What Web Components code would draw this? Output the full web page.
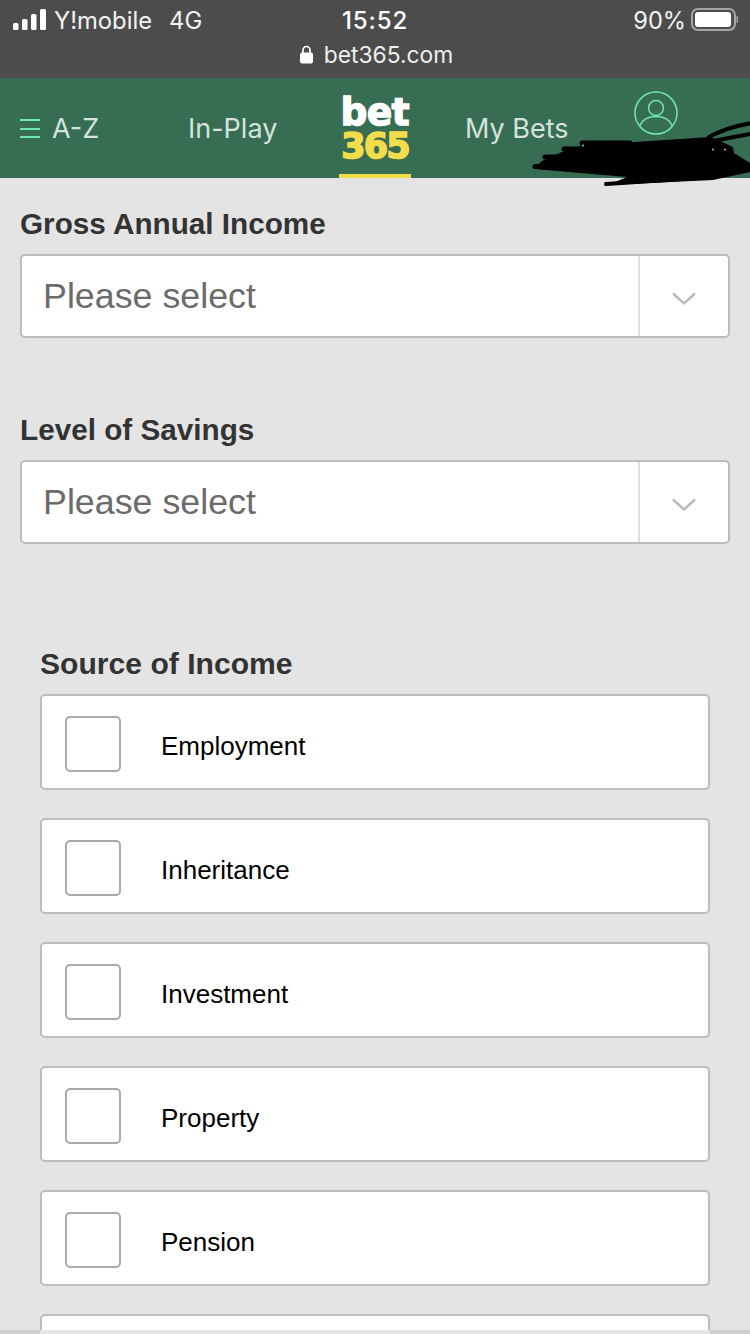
<!DOCTYPE html>
<html><head><meta charset="utf-8"><style>
html,body{margin:0;padding:0;height:1334px;overflow:hidden;background:#e4e4e4;font-family:"Liberation Sans",Arial,sans-serif}
</style></head><body>
<app-screen>
<status-bar></status-bar>
<site-header></site-header>
<main-form>
<select-field label="Gross Annual Income"></select-field>
<select-field label="Level of Savings" style="margin-top:75px"></select-field>
<check-group label="Source of Income">
<check-row>Employment</check-row>
<check-row>Inheritance</check-row>
<check-row>Investment</check-row>
<check-row>Property</check-row>
<check-row>Pension</check-row>
<check-row></check-row>
</check-group>
</main-form>
</app-screen>
<script>
function def(name,html){customElements.define(name,class extends HTMLElement{constructor(){super();this.attachShadow({mode:'open'}).innerHTML=html}connectedCallback(){const l=this.getAttribute('label');const t=this.shadowRoot.querySelector('.label');if(l&&t)t.textContent=l}})}
def('app-screen',`<style>:host{display:block;position:relative;width:750px;height:1334px;overflow:hidden}
.strip{position:absolute;left:0;right:0;bottom:0;height:4px;background:#e6e6e6}
.strip i{position:absolute;top:0;height:4px;background:#cfcfcf}</style>
<slot></slot><div class="strip"><i style="left:0;width:40px"></i><i style="right:0;width:40px"></i></div>`);
def('status-bar',`<style>:host{display:block;height:78px;box-sizing:border-box;background:#4d4c4c;color:#fff;font-family:Inter,"Liberation Sans",sans-serif}
.row{display:grid;grid-template-columns:1fr auto 1fr;align-items:center;height:40px}
.l{display:flex;align-items:center;padding-left:13px;font-size:23.800px;color:#f2f2f2}
.l svg{margin:-2px 7px 0 0}.l span+span{margin-left:17px}
.t{font-size:24px;font-weight:500;letter-spacing:.9px}
.r{display:flex;justify-content:flex-end;align-items:center;padding-right:11px;font-size:23.600px;color:#f2f2f2}
.r svg{margin-left:5px}
.url{display:flex;justify-content:center;align-items:center;height:24px;padding-left:3px;font-size:22.800px;color:#eee;margin-top:2px}
.url svg{margin-right:11px}</style>
<div class="row"><div class="l"><svg width="34" height="21" viewBox="0 0 34 21"><rect x="0" y="14" width="5.500" height="7" rx="1.500" fill="#fff"/><rect x="9" y="10" width="5.500" height="11" rx="1.500" fill="#fff"/><rect x="18" y="5" width="5.500" height="16" rx="1.500" fill="#fff"/><rect x="27" y="0" width="6" height="21" rx="1.500" fill="#fff"/></svg><span>Y!mobile</span><span>4G</span></div>
<div class="t">15:52</div>
<div class="r"><span>90%</span><svg width="48" height="24" viewBox="0 0 48 24"><rect x="1" y="1" width="43" height="21" rx="6" fill="none" stroke="#a5a5a5" stroke-width="2"/><rect x="4" y="4" width="36" height="15" rx="3" fill="#fff"/><rect x="45.500" y="8" width="1.500" height="7" rx=".7" fill="#a5a5a5"/></svg></div></div>
<div class="url"><svg width="13" height="19" viewBox="0 0 13 19"><path d="M3 8V5a3.500 3.500 0 0 1 7 0v3" fill="none" stroke="#fff" stroke-width="1.700"/><rect x="0" y="7.500" width="13" height="11" rx="2" fill="#fff"/></svg><span>bet365.com</span></div>`);
def('site-header',`<style>:host{display:block;height:100px;background:#366d53;position:relative;color:#d5e3dc;font-family:Inter,"Liberation Sans",sans-serif;font-size:27px}
.bar{display:grid;grid-template-columns:33px 136px 150px 127px 169px 1fr;height:100px;padding-left:19px;box-sizing:border-box;align-items:start}
.menu{margin:41px 0 0 1px;display:flex;flex-direction:column;gap:6.500px}
.menu i{display:block;width:20px;height:2px;background:#71e5b5}
.item{margin-top:34px;white-space:nowrap;line-height:34px}
.logo{width:72px;height:100px;margin-left:1px;box-sizing:border-box;border-bottom:4px solid #f4dd4b;font-family:"DejaVu Sans",sans-serif;display:flex;flex-direction:column;align-items:center;padding-top:19px}
.logo b{display:block;font-size:37px;line-height:32px;letter-spacing:-.3px;color:#fff;font-weight:700;-webkit-text-stroke:1.600px currentColor}
.logo .n{color:#f4dd4b;font-size:35px;line-height:28px;letter-spacing:-1.800px;margin-top:3px}
.user{margin-top:13px;display:block}
.scr{position:absolute;left:520px;top:37px;pointer-events:none}</style>
<div class="bar"><div class="menu"><i></i><i></i><i></i></div><div class="item">A-Z</div><div class="item">In-Play</div><div class="logo"><b>bet</b><b class="n">365</b></div><div class="item">My Bets</div>
<svg class="user" width="44" height="44" viewBox="0 0 44 44" fill="none" stroke="#71e5b5" stroke-width="1.500"><circle cx="22" cy="22" r="21"/><circle cx="22" cy="17" r="7.500"/><path d="M5.500 35c3-7 9.500-9.500 16.500-9.500s13.500 2.500 16.500 9.500"/></svg></div>
<svg class="scr" width="230" height="80" viewBox="0 0 230 80"><path fill="#000" d="M62 26 100 28 190 22 200 26 213 32 214 38 230 48V57L193 65 88 70 107 62 14 54 22 46 42 37 60 31Z"/><path fill="none" stroke="#000" stroke-linecap="round" d="M189 22C205 13 220 10 232 8" stroke-width="4"/><path fill="none" stroke="#000" d="M193 26 230 19" stroke-width="4"/><path fill="none" stroke="#000" stroke-linecap="round" d="M62 28H110M44 34H100M25 42H100M15 51.500H100" stroke-width="5"/><path fill="none" stroke="#000" stroke-linecap="round" d="M86 69 193 62" stroke-width="4"/><circle cx="193" cy="34.500" r="1" fill="#bbb"/><circle cx="205" cy="34.500" r="1" fill="#bbb"/><circle cx="63" cy="30.500" r="1" fill="#bbb"/></svg>`);
def('main-form',`<style>:host{display:block;padding:29px 20px 0}</style><slot></slot>`);
const chev=`<svg width="24" height="14" viewBox="0 0 24 14" fill="none" stroke="#b9b9b9" stroke-width="2.400"><path d="M1 1.500l11 10 11-10"/></svg>`;
def('select-field',`<style>:host{display:block}
.label{font-size:29.700px;font-weight:700;color:#333;line-height:34px;margin-bottom:13px}
.box{display:flex;height:84px;box-sizing:border-box;border:2px solid #bcbcbc;border-radius:5px;background:#fff}
.v{flex:1;display:flex;align-items:center;padding:1px 0 0 21px;font-size:35.800px;color:#6b6b6b;border-right:2px solid #ddd}
.c{width:88px;display:flex;align-items:center;justify-content:center;padding-top:6px;box-sizing:border-box}</style>
<div class="label"></div><div class="box"><div class="v">Please select</div><div class="c">${chev}</div></div>`);
def('check-group',`<style>:host{display:block;padding:103px 20px 0}
.label{font-size:30.100px;font-weight:700;color:#333;line-height:34px;margin-bottom:13px}
.list{display:flex;flex-direction:column;gap:28px}</style>
<div class="label"></div><div class="list"><slot></slot></div>`);
def('check-row',`<style>:host{display:flex;height:96px;box-sizing:border-box;border:2px solid #bcbcbc;border-radius:5px;background:#fff;align-items:flex-start}
.b{width:56px;height:56px;box-sizing:border-box;border:2px solid #a9a9a9;border-radius:5px;margin:20px 0 0 23px;flex:none}
.t{margin:33px 0 0 40px;font-size:26px;line-height:34px;color:#000}</style>
<div class="b"></div><div class="t"><slot></slot></div>`);
</script>
</body></html>
